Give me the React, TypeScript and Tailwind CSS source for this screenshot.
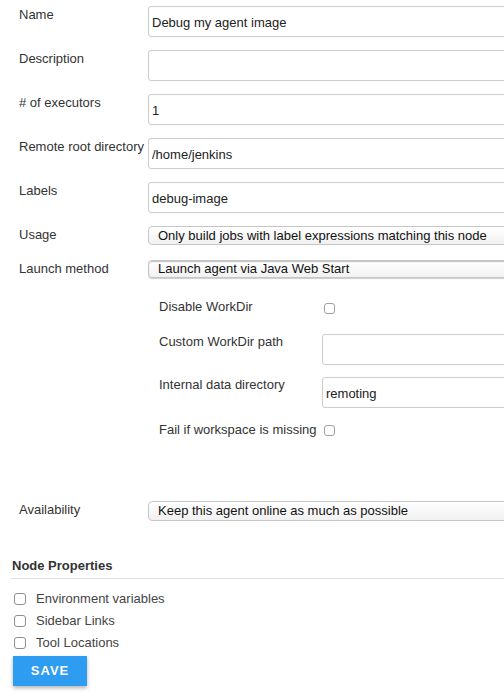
import React from "react";

const font = "font-['Liberation_Sans',Arial,Helvetica,sans-serif]";

const inputCls =
  "h-[31px] w-[400px] shrink-0 rounded-[3px] border border-[#cccccc] bg-white pl-[3px] pt-[1px] text-[13px] text-[#222] outline-none";

const selectCls =
  "w-[400px] shrink-0 rounded-[4px] border border-[#c6c6c6] bg-gradient-to-b from-white to-[#f1f1f1] pl-[9px] text-[13px] leading-[16px] text-[#111]";

const boxCls =
  "appearance-none shrink-0 rounded-[3px] border border-[#8f8f8f] bg-white";

function Row({ label, children, top }: { label: string; children: React.ReactNode; top: string }) {
  return (
    <div className={`flex items-start ${top}`}>
      <label className="w-[129px] shrink-0 pt-[1px] leading-4 text-[#333]">{label}</label>
      {children}
    </div>
  );
}

function SubRow({ label, children, top }: { label: string; children: React.ReactNode; top: string }) {
  return (
    <div className={`flex items-start ${top}`}>
      <label className="w-[163px] shrink-0 leading-4 text-[#333]">{label}</label>
      {children}
    </div>
  );
}

const PROPS = ["Environment variables", "Sidebar Links", "Tool Locations"];

export default function App() {
  return (
    <div className={`h-[695px] w-[504px] overflow-hidden bg-white text-[13px] ${font}`}>
      {/* 基本設定 */}
      <div className="flex flex-col pl-[19px]">
        <Row label="Name" top="mt-[6px]">
          <input className={inputCls} defaultValue="Debug my agent image" />
        </Row>
        <Row label="Description" top="mt-[13px]">
          <input className={inputCls} defaultValue="" />
        </Row>
        <Row label="# of executors" top="mt-[13px]">
          <input className={inputCls} defaultValue="1" />
        </Row>
        <Row label="Remote root directory" top="mt-[13px]">
          <input className={inputCls} defaultValue="/home/jenkins" />
        </Row>
        <Row label="Labels" top="mt-[13px]">
          <input className={inputCls} defaultValue="debug-image" />
        </Row>
        <Row label="Usage" top="mt-[13px]">
          <div className={`${selectCls} h-[19px] pt-[1px]`}>
            Only build jobs with label expressions matching this node
          </div>
        </Row>
        <Row label="Launch method" top="mt-[15px]">
          <div
            className={`${selectCls} h-[18px] border-[#8c8c8c] shadow-[inset_0_1px_1px_rgba(0,0,0,0.25),0_1px_1px_rgba(0,0,0,0.2)]`}
          >
            Launch agent via Java Web Start
          </div>
        </Row>

        {/* 起動オプション */}
        <div className="ml-[140px] flex flex-col">
          <SubRow label="Disable WorkDir" top="mt-[21px]">
            <input type="checkbox" className={`${boxCls} ml-[2px] mt-[4px] h-[11px] w-[11px] border-[#a0a0a0]`} />
          </SubRow>
          <SubRow label="Custom WorkDir path" top="mt-[19px]">
            <input className={inputCls} defaultValue="" />
          </SubRow>
          <SubRow label="Internal data directory" top="mt-[12px]">
            <input className={inputCls} defaultValue="remoting" />
          </SubRow>
          <div className="mt-[14px] flex items-start">
            <label className="leading-4 text-[#333]">Fail if workspace is missing</label>
            <input type="checkbox" className={`${boxCls} ml-[7px] mt-[3px] h-[11px] w-[11px] border-[#a0a0a0]`} />
          </div>
        </div>

        <Row label="Availability" top="mt-[63px]">
          <div className={`${selectCls} h-[20px] pt-[1px]`}>Keep this agent online as much as possible</div>
        </Row>
      </div>

      {/* Node Properties */}
      <div className="ml-[11px] mt-[37px] border-b border-[#dddddd] pb-[4px]">
        <h3 className="pl-px text-[13px] font-bold leading-4 text-[#333]">Node Properties</h3>
      </div>
      <div className="ml-[14px] mt-[9px] flex flex-col">
        {PROPS.map((p) => (
          <div key={p} className="flex h-[22px] items-center gap-[10px]">
            <input type="checkbox" className={`${boxCls} h-[12px] w-[12px]`} />
            <span className="leading-4 text-[#444]">{p}</span>
          </div>
        ))}
      </div>
      <button className="ml-[13px] mt-[2px] h-[30px] w-[74px] bg-[#2e9cf0] text-[13px] font-bold tracking-[1px] text-white shadow-[0_2px_4px_rgba(0,0,0,0.3)]">
        SAVE
      </button>
    </div>
  );
}
